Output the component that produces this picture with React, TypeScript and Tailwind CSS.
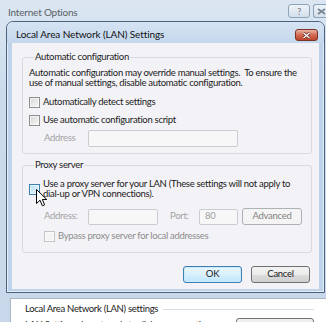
import React from 'react';

function CheckBox({ state = 'normal' }: { state?: 'normal' | 'hover' | 'disabled' }) {
  const cls =
    state === 'hover'
      ? 'border-[#3c7fb1] bg-[linear-gradient(135deg,#b9e0f5,#e8f6fd)]'
      : state === 'disabled'
        ? 'border-[#c4c4c4] bg-[#f4f4f4]'
        : 'border-[#8e8f8f] bg-[linear-gradient(135deg,#d6d6d6,#f8f8f8)]';
  return (
    <span className={`block w-[11px] h-[11px] shrink-0 border ${cls} shadow-[inset_0_0_0_1px_#ffffff99]`} />
  );
}

function Field({ w, h = 16, value }: { w: string; h?: number; value?: string }) {
  return (
    <div
      className={`${w} ${h === 17 ? 'h-[17px]' : 'h-[16px]'} border border-[#c9cdd1] rounded-[2px] bg-[#f7f7f8] flex items-center pl-[5px] text-[#a0a0a0]`}
    >
      {value}
    </div>
  );
}

function Cursor() {
  return (
    <svg className="absolute left-[36px] top-[189px]" width="12" height="18" viewBox="0 0 12 18">
      <path
        d="M0.5 0.5 L0.5 14.5 L4 11.2 L6.4 16.8 L8.6 15.8 L6.3 10.5 L10.8 10.5 Z"
        fill="#fff"
        stroke="#000"
        strokeWidth="1"
        strokeLinejoin="miter"
      />
    </svg>
  );
}

export default function App() {
  return (
    <div className="relative w-[326px] h-[322px] overflow-hidden bg-[linear-gradient(180deg,#dbe6f2,#ccdbeb_30%,#c8d8ea)] font-['Lato',sans-serif] text-[9.5px] tracking-[-0.3px] text-[#1b1b1b] whitespace-nowrap">
      {/* outer window caption */}
      <div className="h-[21px] flex items-start">
        <span className="ml-[8px] mt-[6px] text-[10px] leading-[12px] tracking-[-0.2px] text-[#5a5f66]">Internet Options</span>
        <div className="ml-auto mt-[4px] flex gap-[3px]">
          <div className="w-[22px] h-[14px] border border-[#8fa3b8] rounded-[3px] bg-[linear-gradient(180deg,#eef3f9,#d3dfec)] flex items-center justify-center text-[9px] text-[#6b7480] leading-none">
            ?
          </div>
          <div className="w-[13px] h-[14px] border border-r-0 border-[#8fa3b8] rounded-l-[3px] bg-[linear-gradient(180deg,#eef3f9,#d3dfec)] flex items-center pl-[3px] overflow-hidden">
            <svg className="shrink-0" width="10" height="7" viewBox="0 0 10 7">
              <path d="M1 1 L8 6 M8 1 L1 6" stroke="#7a8593" strokeWidth="1.6" />
            </svg>
          </div>
        </div>
      </div>

      {/* LAN settings dialog */}
      <div className="ml-[6px] w-[319px] h-[272px] border border-[#4d6480] rounded-t-[7px] bg-[#bfd3ea] shadow-[inset_0_0_0_1px_#e3edf7] flex flex-col">
        <div className="h-[21px] shrink-0 flex items-start rounded-t-[6px] bg-[linear-gradient(180deg,#d6e4f3,#c4d7ed)]">
          <span className="ml-[9px] mt-[6px] text-[10px] leading-[12px] tracking-[-0.1px] text-[#111]">Local Area Network (LAN) Settings</span>
          <div className="ml-auto mr-[6px] mt-[7px] w-[23px] h-[12px] border border-[#7a3426] rounded-[3px] bg-[linear-gradient(180deg,#eab2a4,#d26b55_50%,#c0422c)] flex items-center justify-center">
            <svg width="9" height="7" viewBox="0 0 9 7">
              <path d="M1.5 1 L7.5 6 M7.5 1 L1.5 6" stroke="#5a2218" strokeWidth="2.6" />
              <path d="M1.5 1 L7.5 6 M7.5 1 L1.5 6" stroke="#fff" strokeWidth="1.4" />
            </svg>
          </div>
        </div>

        <div className="mx-[5px] h-[246px] shrink-0 bg-[#f3f2f6] pl-[10px] pt-[8px] flex flex-col">
          {/* automatic configuration */}
          <fieldset className="w-[290px] border border-[#d5dbe1] rounded-[3px] pl-[6px] pb-[6px]">
            <legend className="ml-[5px] px-[1px] leading-[12px]">Automatic configuration</legend>
            <p className="mt-[5px] leading-[10px]">
              Automatic configuration may override manual settings.&nbsp; To ensure the
              <br />
              use of manual settings, disable automatic configuration.
            </p>
            <label className="mt-[8px] flex items-center gap-[3px] leading-[12px]">
              <CheckBox />
              Automatically detect settings
            </label>
            <label className="mt-[6px] flex items-center gap-[3px] leading-[12px]">
              <CheckBox />
              Use automatic configuration script
            </label>
            <div className="mt-[4px] ml-[15px] flex items-center">
              <span className="w-[44px] text-[#a3a3a3]">Address</span>
              <Field w="w-[150px]" h={17} />
            </div>
          </fieldset>

          {/* proxy server */}
          <fieldset className="mt-[5px] w-[290px] border border-[#d5dbe1] rounded-[3px] pl-[6px] pb-[10px]">
            <legend className="ml-[5px] px-[1px] leading-[12px]">Proxy server</legend>
            <label className="mt-[8px] flex items-center gap-[3px] leading-[10px]">
              <CheckBox state="hover" />
              <span>
                Use a proxy server for your LAN (These settings will not apply to
                <br />
                dial-up or VPN connections).
              </span>
            </label>
            <div className="mt-[9px] ml-[15px] flex items-center text-[#a3a3a3]">
              <span className="w-[44px]">Address:</span>
              <Field w="w-[70px]" />
              <span className="ml-[12px] w-[29px]">Port:</span>
              <Field w="w-[39px]" value="80" />
              <div className="ml-[4px] w-[60px] h-[17px] border border-[#adb2b5] rounded-[3px] bg-[#f4f4f4] flex items-center justify-center text-[#838383]">
                Advanced
              </div>
            </div>
            <label className="mt-[5px] ml-[15px] flex items-center gap-[3px] leading-[12px] text-[#8d8d8d]">
              <CheckBox state="disabled" />
              Bypass proxy server for local addresses
            </label>
          </fieldset>

          <div className="mt-[13px] mr-[9px] flex justify-end gap-[9px]">
            <button className="w-[59px] h-[17px] border border-[#3c7fb1] rounded-[3px] bg-[linear-gradient(180deg,#eaf6fd,#d9f0fc_50%,#bee6fd)] shadow-[inset_0_0_0_1px_#cbe9f9] flex items-center justify-center">
              OK
            </button>
            <button className="w-[59px] h-[17px] border border-[#707070] rounded-[3px] bg-[linear-gradient(180deg,#f2f2f2,#ebebeb_50%,#dddddd_51%,#cfcfcf)] flex items-center justify-center">
              Cancel
            </button>
          </div>
        </div>
      </div>

      {/* underlying Internet Options connections tab */}
      <div className="ml-[10px] mt-[5px] h-[40px] bg-white border-l border-t border-[#a9b6c4] pl-[14px] pr-[12px] pt-[4px]">
        <div className="flex items-center gap-[5px] leading-[12px]">
          <span>Local Area Network (LAN) settings</span>
          <span className="flex-1 h-px bg-[#d5dfe5]" />
        </div>
        <div className="mt-[3px] flex items-start">
          <span className="mt-[1px] leading-[12px]">LAN Settings do not apply to dial-up connections.</span>
          <div className="ml-auto w-[78px] h-[17px] border border-[#707070] rounded-[3px] bg-[linear-gradient(180deg,#f2f2f2,#dddddd)] flex items-center justify-center">
            LAN settings
          </div>
        </div>
      </div>

      <Cursor />
    </div>
  );
}
